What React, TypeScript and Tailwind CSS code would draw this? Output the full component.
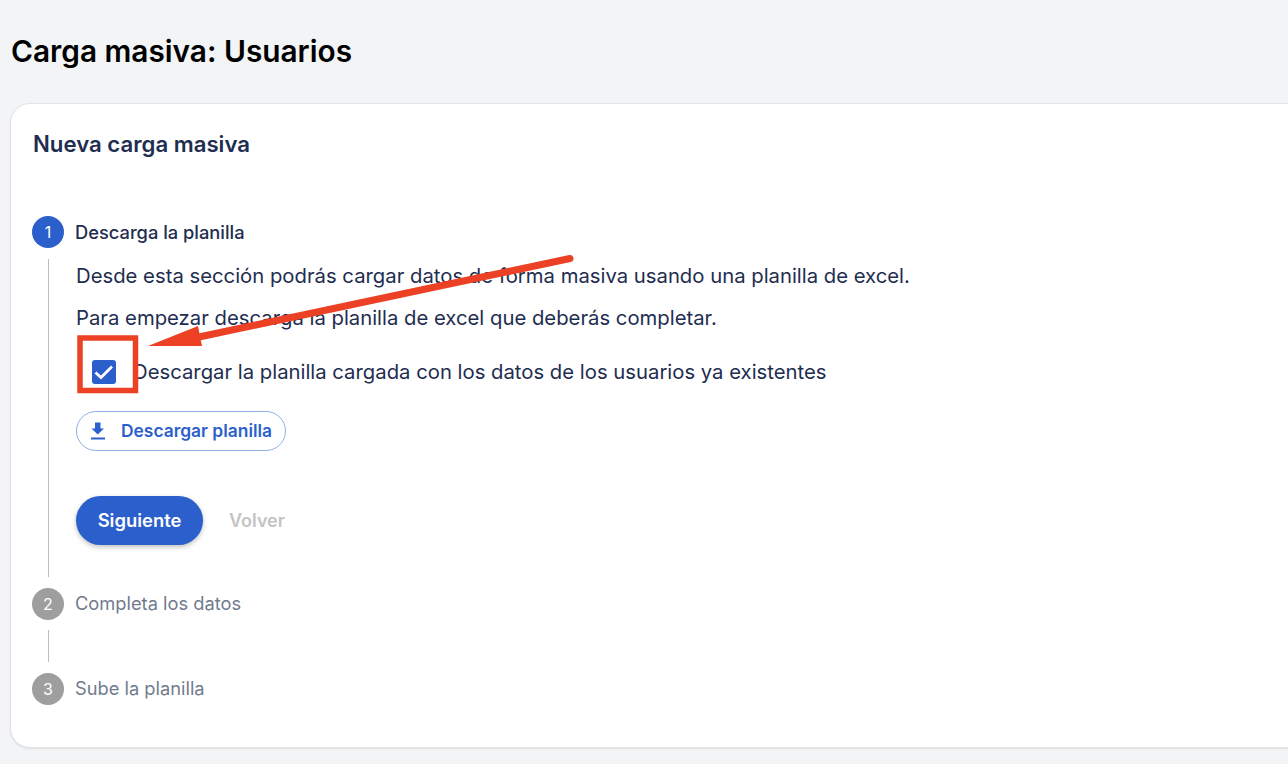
import React from "react";

const font = { fontFamily: "Inter, 'Noto Sans', sans-serif" };

function Circle({ n, active }: { n: number; active?: boolean }) {
  return (
    <div className={`flex h-8 w-8 shrink-0 items-center justify-center rounded-full text-[16px] text-white ${active ? "bg-[#2b5fcb]" : "bg-[#9e9e9e]"}`}>
      {n}
    </div>
  );
}

function Annotation() {
  return (
    <svg className="pointer-events-none absolute left-0 top-0" width="1288" height="764" viewBox="0 0 1288 764">
      <rect x="80" y="338" width="55.500" height="52.500" fill="none" stroke="#ec4125" strokeWidth="5.500" />
      <path d="M570 258.500 L199 337" stroke="#ec4125" strokeWidth="7" strokeLinecap="round" fill="none" />
      <polygon points="148,346 198,326 202,346" fill="#ec4125" />
    </svg>
  );
}

export default function App() {
  return (
    <div style={font} className="relative h-[764px] w-[1288px] overflow-hidden bg-[#f3f4f6]">
      <h1 className="pl-[11px] pt-[31px] text-[29.800px] font-semibold leading-[40px] text-black">Carga masiva: Usuarios</h1>
      <div className="ml-[10px] mt-[32px] h-[645px] w-[1320px] rounded-[20px] border border-[#e2e3e5] bg-white pl-[21px] pt-[24px] shadow-[0_1px_2px_rgba(0,0,0,0.08)]">
        <h2 className="h-[32px] pl-[1px] text-[22.200px] font-semibold leading-[32px] text-[#1e2d50]">Nueva carga masiva</h2>

        <div className="mt-[56px] flex items-center gap-[11px]">
          <Circle n={1} active />
          <span className="pt-[1px] text-[18.300px] font-medium text-[#1e2d50]">Descarga la planilla</span>
        </div>

        <div className="ml-[16px] mt-[11px] h-[318px] border-l border-[#bdbdbd] pl-[27px] text-[20.300px] text-[#1e2d50]">
          <p className="pt-[3px] mt-[3px] h-[31px] leading-[28px]">Desde esta sección podrás cargar datos de forma masiva usando una planilla de excel.</p>
          <p className="mt-[14px] h-[28px] leading-[28px]">Para empezar descarga la planilla de excel que deberás completar.</p>
          <div className="mt-[28px] flex h-[24px] items-center pl-[16px]">
            <div className="flex h-6 w-6 items-center justify-center rounded-[3px] bg-[#2b5fcb]">
              <svg width="20" height="20" viewBox="0 0 20 20" fill="none">
                <path d="M1.500 10.500 L7 15.500 L18 4.500" stroke="white" strokeWidth="2.800" />
              </svg>
            </div>
            <span className="ml-[17px] leading-[24px]">Descargar la planilla cargada con los datos de los usuarios ya existentes</span>
          </div>
          <button className="mt-[27px] flex h-[40px] w-[210px] items-center rounded-full border border-[#8fafe6] bg-white pl-[13px] text-[17.400px] font-semibold text-[#2b5fcb]">
            <svg width="16" height="20" viewBox="0 0 16 20" fill="#2b5fcb">
              <path d="M5 1.500 H10.500 V7.500 H14 L7.750 13.500 L1.500 7.500 H5 Z" />
              <rect x="1" y="16.500" width="14" height="2" />
            </svg>
            <span className="ml-[15px]">Descargar planilla</span>
          </button>
          <div className="mt-[45px] flex items-center">
            <button className="h-[49px] w-[127px] rounded-full bg-[#2b5fcb] text-[18.400px] font-semibold text-white shadow-[0_2px_5px_rgba(0,0,0,0.25)]">Siguiente</button>
            <span className="ml-[26px] text-[18px] font-semibold text-[#c4c4c4]">Volver</span>
          </div>
        </div>

        <div className="mt-[11px] flex items-center gap-[11px]">
          <Circle n={2} />
          <span className="text-[18.300px] text-[#727b8e]">Completa los datos</span>
        </div>
        <div className="ml-[16px] mt-[10px] h-[32px] border-l border-[#bdbdbd]" />
        <div className="mt-[11px] flex items-center gap-[11px]">
          <Circle n={3} />
          <span className="text-[18.300px] text-[#727b8e]">Sube la planilla</span>
        </div>
      </div>
      <Annotation />
    </div>
  );
}
